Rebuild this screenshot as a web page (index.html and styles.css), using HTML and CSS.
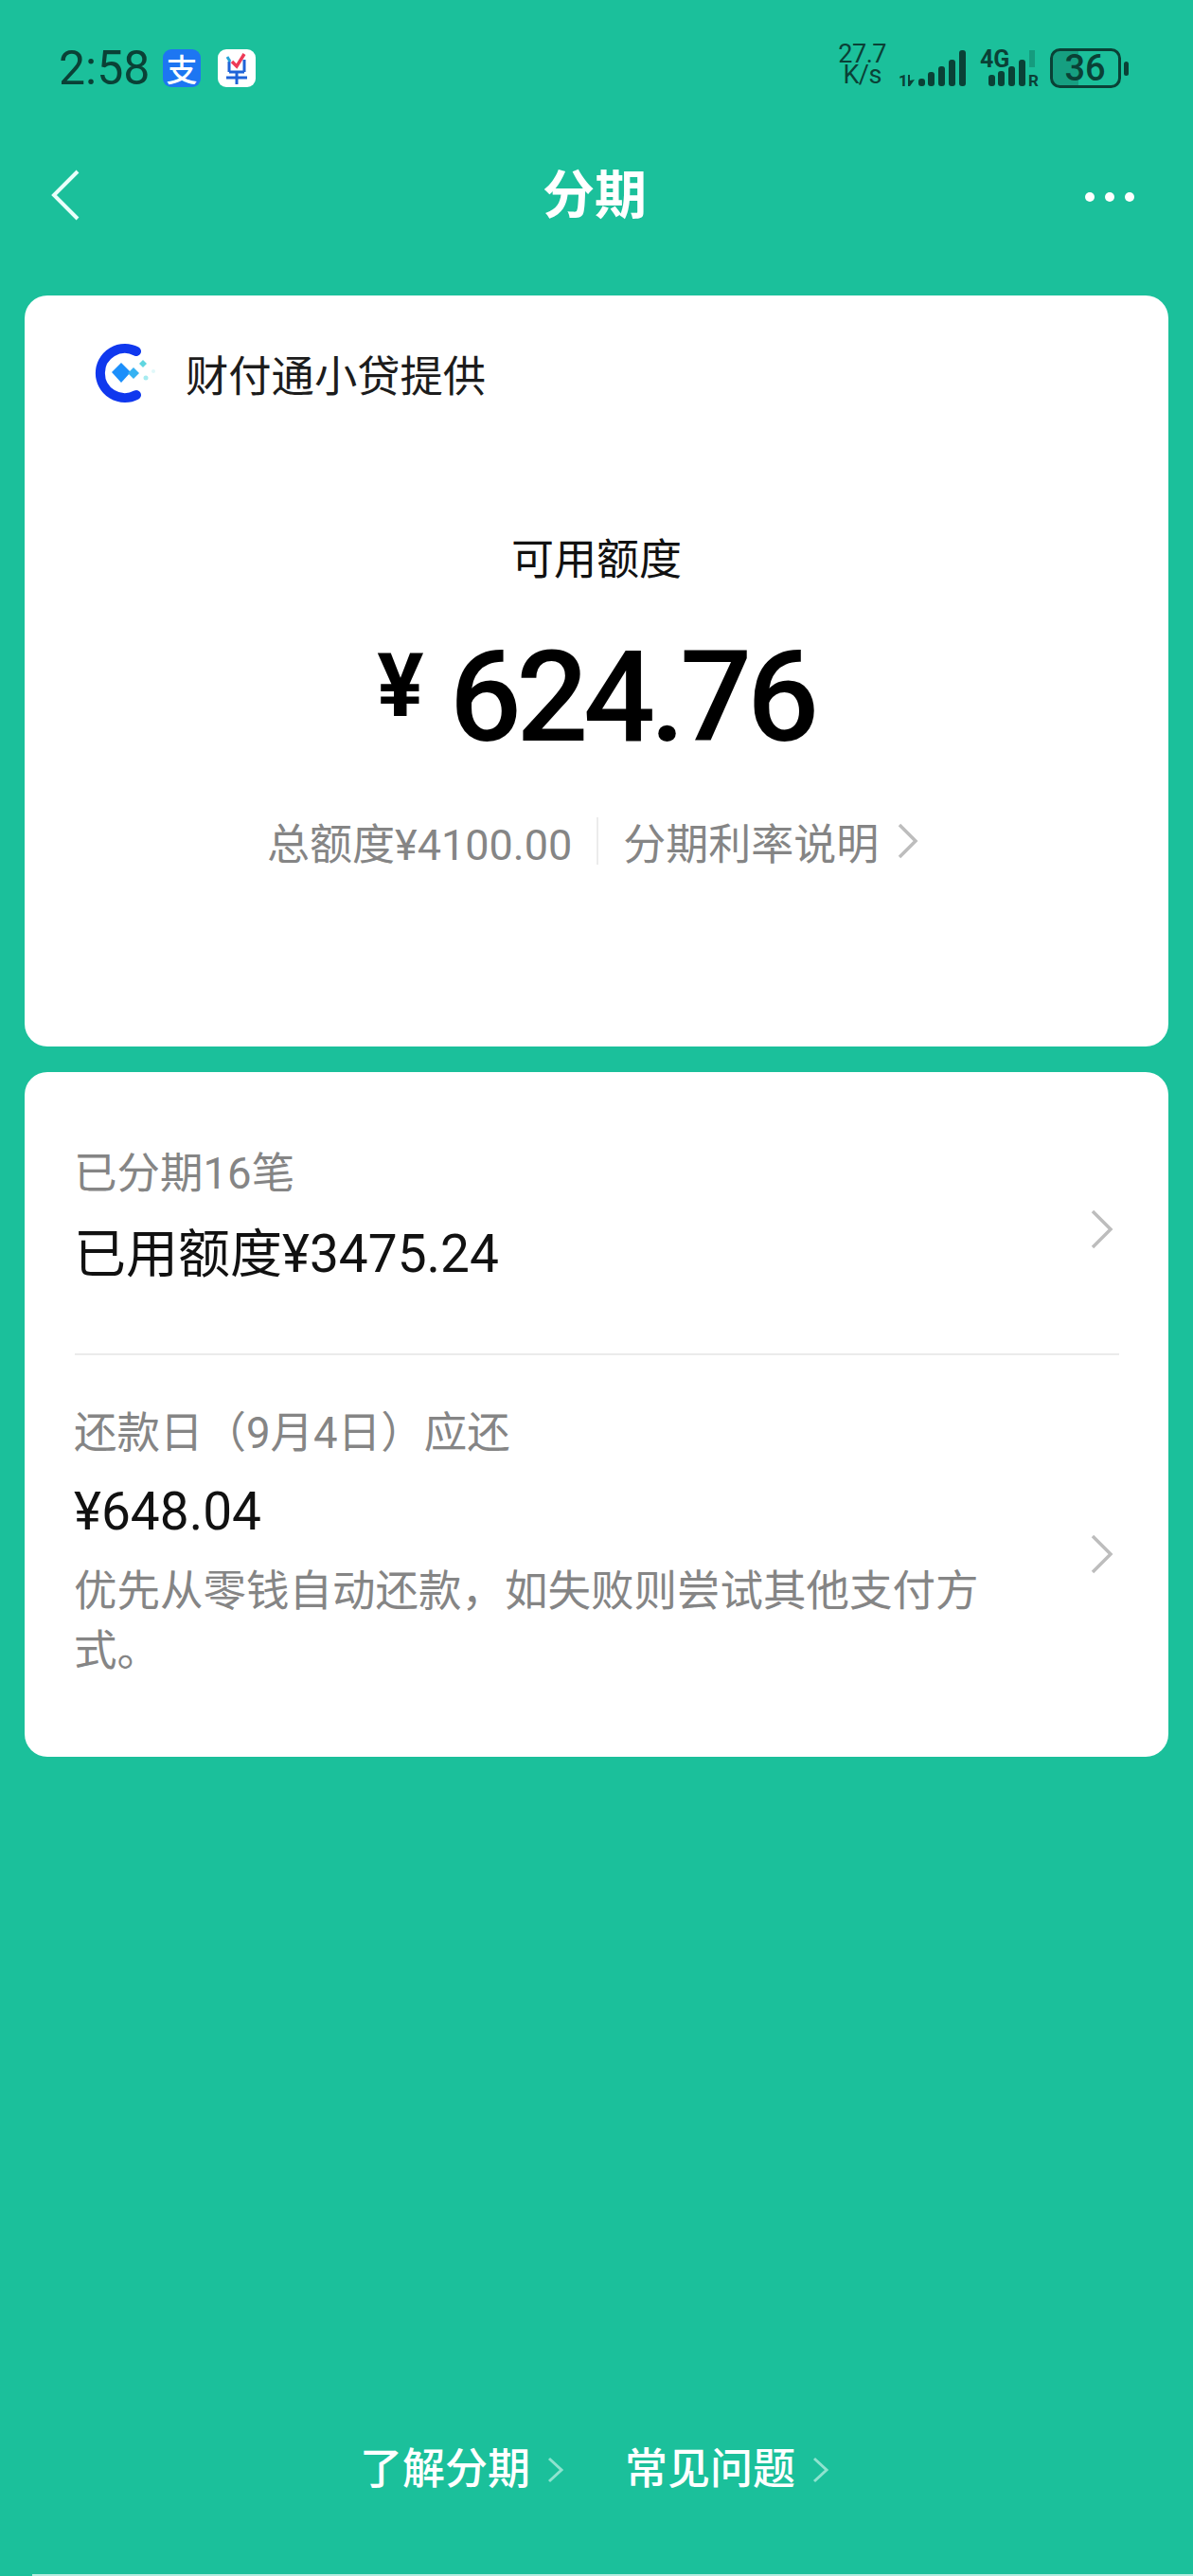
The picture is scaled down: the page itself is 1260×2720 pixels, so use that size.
FILE: index.html
```html
<!DOCTYPE html>
<html lang="zh-CN">

<head>
    <meta charset="UTF-8">
    <meta name="viewport" content="width=device-width, initial-scale=1.0">
    <title>分期</title>
    <link rel="stylesheet" href="styles.css">
</head>

<body>
    <div class="page">
        <div class="status">
            <div class="status-left">
                <span class="time">2:58</span>
                <span class="app-icon alipay">支</span>
                <span class="app-icon notify">
                    <svg width="40" height="40" viewBox="0 0 40 40" fill="none">
                        <path d="M12 13v11M28 11v13M12 24h16M9 30h22M20 24v13" stroke="#1f63d8" stroke-width="3" />
                        <path d="M10 8l3 5" stroke="#27a3d8" stroke-width="3" />
                        <path d="M15 13l5 5 8-13" stroke="#ee3a57" stroke-width="3.5" />
                    </svg>
                </span>
            </div>
            <div class="status-right">
                <div class="speed">27.7<br><span class="speed-unit">K/s</span></div>
                <svg class="status-icons" width="246" height="52" viewBox="949 46 246 52">
                    <text x="949" y="91" class="tiny">1</text>
                    <path d="M959 79h2v6l5-1-5 7h-2z" />
                    <rect x="970" y="83" width="7" height="8" rx="3" />
                    <rect x="980" y="76" width="7" height="15" rx="3" />
                    <rect x="991" y="70" width="7" height="21" rx="3" />
                    <rect x="1002" y="63" width="7" height="28" rx="3" />
                    <rect x="1013" y="53" width="7" height="38" rx="3" />
                    <text x="1035" y="71" class="net">4G</text>
                    <rect x="1044" y="79" width="7" height="12" rx="3" />
                    <rect x="1054" y="75" width="7" height="16" rx="3" />
                    <rect x="1065" y="70" width="7" height="21" rx="3" />
                    <rect x="1076" y="63" width="7" height="28" rx="3" />
                    <rect x="1087" y="53" width="6" height="18" class="faint" />
                    <text x="1086" y="91" class="tiny">R</text>
                    <path d="M1116 53h23v38h-23a6 6 0 0 1-6-6v-26a6 6 0 0 1 6-6z" class="level" />
                    <rect x="1110.500" y="52.500" width="72" height="39" rx="9" class="shell" />
                    <text x="1146" y="85" class="level-num">36</text>
                    <rect x="1187" y="65" width="5" height="15" rx="2.500" />
                </svg>
            </div>
        </div>

        <div class="nav">
            <svg class="back" width="30" height="54" viewBox="0 0 30 54" fill="none">
                <path d="M28 2L3 27l25 25" stroke="#e9fffa" stroke-width="4" />
            </svg>
            <div class="nav-title">分期</div>
            <div class="more"><i></i><i></i><i></i></div>
        </div>

        <div class="card quota">
            <div class="provider">
                <svg width="70" height="62" viewBox="0 0 70 62" fill="none">
                    <path d="M46 8A26 26 0 1 0 46 54" stroke="#1038ee" stroke-width="10" stroke-linecap="round" />
                    <path d="M30 20l10 10-10 11-10-11z" fill="#1c8ffb" />
                    <path d="M43 25l6 6-6 6-6-6z" fill="#36b2f2" />
                    <path d="M53 17l4 4-4 4-4-4z" fill="#5fd6e0" />
                    <circle cx="56" cy="36" r="2.500" fill="#a5ebf0" />
                    <circle cx="64" cy="29" r="2" fill="#e0f8fa" />
                </svg>
                <span>财付通小贷提供</span>
            </div>
            <div class="quota-label">可用额度</div>
            <div class="quota-amount"><span class="yen">¥</span><span class="num">624.76</span></div>
            <div class="quota-sub">
                <span>总额度¥4100.00</span>
                <span class="sep"></span>
                <span>分期利率说明</span>
                <svg class="sub-arrow" width="22" height="38" viewBox="0 0 22 38" fill="none">
                    <path d="M2 2l17 17L2 36" stroke="#bdbdbd" stroke-width="3.500" />
                </svg>
            </div>
        </div>

        <div class="card list">
            <div class="row row-used">
                <div class="row-text">
                    <div class="muted">已分期16笔</div>
                    <div class="used">已用额度¥3475.24</div>
                </div>
                <svg class="arrow arrow-used" width="24" height="42" viewBox="0 0 24 42" fill="none">
                    <path d="M2 2l19 19L2 40" stroke="#bdbdbd" stroke-width="3.500" />
                </svg>
            </div>
            <div class="line"></div>
            <div class="row row-due">
                <div class="row-text row-text-due">
                    <div class="muted">还款日（9月4日）应还</div>
                    <div class="due">¥648.04</div>
                    <div class="muted desc">优先从零钱自动还款，如失败则尝试其他支付方式。</div>
                </div>
                <svg class="arrow arrow-due" width="24" height="42" viewBox="0 0 24 42" fill="none">
                    <path d="M2 2l19 19L2 40" stroke="#bdbdbd" stroke-width="3.500" />
                </svg>
            </div>
        </div>

        <div class="foot">
            <span class="foot-link">了解分期
                <svg width="18" height="28" viewBox="0 0 18 28" fill="none">
                    <path d="M2 2l13 12L2 26" stroke="#8fe3cf" stroke-width="3" />
                </svg>
            </span>
            <span class="foot-link">常见问题
                <svg width="18" height="28" viewBox="0 0 18 28" fill="none">
                    <path d="M2 2l13 12L2 26" stroke="#8fe3cf" stroke-width="3" />
                </svg>
            </span>
        </div>
        <div class="edge"></div>
    </div>
</body>

</html>
```

FILE: styles.css
```css
* {
    padding: 0;
    margin: 0;
    box-sizing: border-box;
}

body {
    background: #1bc09b;
    font-family: Roboto, "Noto Sans CJK SC", sans-serif;
    overflow: hidden;
}

.page {
    width: 1260px;
    height: 2720px;
    display: flex;
    flex-direction: column;
}

/* status bar */
.status {
    height: 112px;
    padding: 32px 65px 0 62px;
    display: flex;
    justify-content: space-between;
    align-items: flex-start;
}

.status-left {
    height: 80px;
    display: flex;
    align-items: center;
}

.time {
    width: 110px;
    font-size: 50px;
    color: #0a4136;
}

.app-icon {
    width: 40px;
    height: 40px;
    border-radius: 9px;
    display: flex;
    justify-content: center;
    align-items: center;
}

.alipay {
    background: #1d76f2;
    color: #fff;
    font-size: 33px;
    font-weight: 500;
}

.notify {
    background: #fff;
    margin-left: 18px;
}

.status-right {
    display: flex;
    gap: 13px;
    margin-top: 14px;
}

.speed {
    font-size: 27px;
    line-height: 22px;
    color: #0a4136;
    text-align: center;
    letter-spacing: -0.5px;
}

.speed-unit {
    font-size: 27px;
}

.status-icons {
    fill: #0a4136;
}

.tiny {
    font-family: Roboto, sans-serif;
    font-size: 17px;
    font-weight: 700;
}

.net {
    font-family: Roboto, sans-serif;
    font-size: 25px;
    font-weight: 700;
}

.faint {
    fill: rgba(11, 74, 61, 0.3);
}

.level {
    fill: rgba(11, 74, 61, 0.28);
}

.shell {
    fill: none;
    stroke: #0a4136;
    stroke-width: 3;
}

.level-num {
    font-family: Roboto, sans-serif;
    font-size: 38px;
    font-weight: 500;
    text-anchor: middle;
}

/* title bar */
.nav {
    height: 184px;
    margin-bottom: 16px;
    padding: 3px 62px 0 54px;
    display: grid;
    grid-template-columns: 1fr auto 1fr;
    align-items: center;
}

.nav-title {
    margin-left: 4px;
    font-size: 55px;
    line-height: 60px;
    font-weight: 700;
    color: #fff;
}

.more {
    margin-top: 4px;
    display: flex;
    justify-content: flex-end;
    gap: 11px;
}

.more i {
    width: 10px;
    height: 10px;
    border-radius: 50%;
    background: #fff;
}

/* cards */
.card {
    background: #fff;
    margin: 0 26px;
    border-radius: 24px;
}

.quota {
    height: 793px;
    padding-top: 51px;
}

.provider {
    height: 62px;
    padding-left: 72px;
    display: flex;
    align-items: center;
    gap: 28px;
    font-size: 45.300px;
    color: #1c1c1c;
}

.quota-label {
    margin-top: 137px;
    font-size: 45px;
    line-height: 60px;
    text-align: center;
    color: #111;
}

.quota-amount {
    margin-top: 50px;
    height: 130px;
    padding-right: 2px;
    display: flex;
    justify-content: center;
    align-items: center;
    color: #000;
    font-weight: 500;
}

.yen {
    font-size: 92px;
    line-height: 130px;
    margin-right: 27px;
    font-weight: 700;
    position: relative;
    top: -12px;
}

.num {
    font-size: 134px;
    line-height: 130px;
    letter-spacing: -5.500px;
}

.quota-sub {
    margin-top: 60px;
    height: 52px;
    padding-left: 256px;
    display: flex;
    align-items: center;
    font-size: 45px;
    color: #858585;
}

.sep {
    width: 2px;
    height: 50px;
    margin: 0 26px;
    background: #ececec;
}

.sub-arrow {
    margin-left: 20px;
}

.list {
    margin-top: 27px;
    height: 723px;
}

.row {
    padding: 0 58px 0 52px;
    display: flex;
    justify-content: space-between;
    align-items: center;
}

.row-used {
    height: 297px;
}

.row-due {
    height: 425px;
}

.row-text {
    width: 980px;
    padding-top: 3px;
}

.row-text-due {
    margin-bottom: 34px;
}

.muted {
    font-size: 45.500px;
    line-height: 63px;
    color: #858585;
}

.used {
    margin-top: 20px;
    font-size: 55px;
    line-height: 66px;
    color: #111;
}

.due {
    margin-top: 18px;
    font-size: 55px;
    line-height: 66px;
    color: #111;
}

.desc {
    margin-top: 20px;
}

.arrow-used {
    margin-top: 34px;
}

.arrow-due {
    margin-bottom: 6px;
}

.line {
    height: 2px;
    margin: 0 52px 0 53px;
    background: #ebebeb;
}

/* bottom links */
.foot {
    margin-top: auto;
    margin-bottom: 80px;
    padding-left: 380px;
    display: flex;
    gap: 64px;
    font-size: 45px;
    line-height: 60px;
    font-weight: 500;
    color: #fff;
}

.foot-link {
    display: flex;
    align-items: center;
    gap: 18px;
}

.edge {
    height: 2px;
    margin-left: 34px;
    background: #b5eddf;
}
```
